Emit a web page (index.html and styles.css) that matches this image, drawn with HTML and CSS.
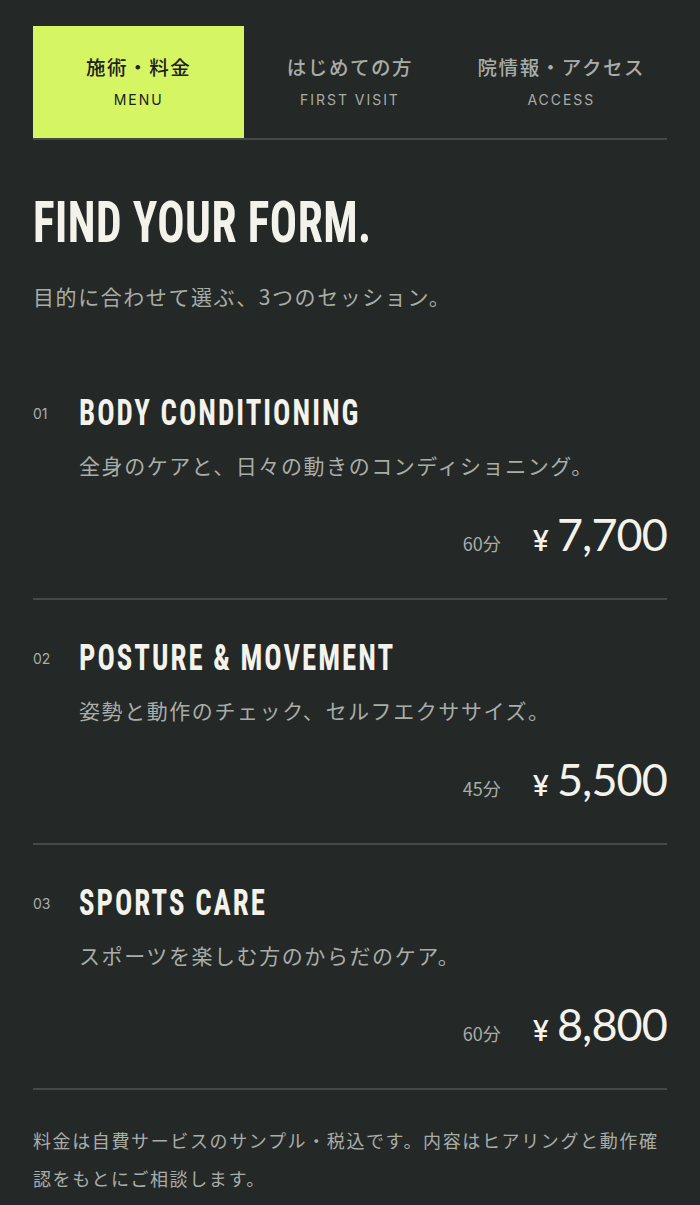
FILE: index.html
```html
<!DOCTYPE html>
<html lang="ja">
<head>
  <meta charset="utf-8">
  <meta name="viewport" content="width=device-width, initial-scale=1">
  <title>施術・料金 | MENU</title>
  <link rel="stylesheet" href="styles.css">
</head>
<body>
  <div class="page">
    <nav class="tabs">
      <a class="tab active" href="#menu">
        <span class="tab-ja">施術・料金</span>
        <span class="tab-en">MENU</span>
      </a>
      <a class="tab" href="#first">
        <span class="tab-ja">はじめての方</span>
        <span class="tab-en">FIRST VISIT</span>
      </a>
      <a class="tab" href="#access">
        <span class="tab-ja">院情報・アクセス</span>
        <span class="tab-en">ACCESS</span>
      </a>
    </nav>

    <header class="intro">
      <h1>FIND YOUR FORM.</h1>
      <p>目的に合わせて選ぶ、3つのセッション。</p>
    </header>

    <ul class="menu-list">
      <li class="menu-item">
        <div class="item-head">
          <span class="item-no">01</span>
          <h2>BODY CONDITIONING</h2>
        </div>
        <p class="item-desc">全身のケアと、日々の動きのコンディショニング。</p>
        <div class="item-price">
          <span class="duration">60分</span>
          <span class="yen">¥</span>
          <span class="amount">7,700</span>
        </div>
      </li>
      <li class="menu-item">
        <div class="item-head">
          <span class="item-no">02</span>
          <h2>POSTURE &amp; MOVEMENT</h2>
        </div>
        <p class="item-desc">姿勢と動作のチェック、セルフエクササイズ。</p>
        <div class="item-price">
          <span class="duration">45分</span>
          <span class="yen">¥</span>
          <span class="amount">5,500</span>
        </div>
      </li>
      <li class="menu-item">
        <div class="item-head">
          <span class="item-no">03</span>
          <h2>SPORTS CARE</h2>
        </div>
        <p class="item-desc">スポーツを楽しむ方のからだのケア。</p>
        <div class="item-price">
          <span class="duration">60分</span>
          <span class="yen">¥</span>
          <span class="amount">8,800</span>
        </div>
      </li>
    </ul>

    <p class="note">料金は自費サービスのサンプル・税込です。内容はヒアリングと動作確認をもとにご相談します。</p>
  </div>
</body>
</html>
```

FILE: styles.css
```css
body {
  margin: 0;
  background: #242827;
  color: #f3f3ec;
  font-family: "Noto Sans CJK JP", "Noto Sans", sans-serif;
}

.page {
  padding: 26px 33px 0;
}

.tabs {
  display: grid;
  grid-template-columns: repeat(3, 1fr);
  border-bottom: 2px solid #454a49;
}

.tab {
  display: flex;
  flex-direction: column;
  align-items: center;
  justify-content: center;
  height: 112px;
  text-decoration: none;
  color: #a9ada7;
}

.tab.active {
  background: #d5f562;
  color: #1d201f;
}

.tab-ja {
  font-size: 19.5px;
  font-weight: 500;
  letter-spacing: 0.08em;
  line-height: 1;
}

.tab-en {
  margin-top: 17px;
  font-family: "Inter", "Noto Sans", sans-serif;
  font-size: 14px;
  letter-spacing: 0.14em;
  line-height: 1;
}

/* condensed display type: Roboto Condensed squeezed a bit more */
.intro h1,
.item-head h2 {
  font-family: "Roboto Condensed", "Roboto", sans-serif;
  font-stretch: condensed;
  font-weight: 700;
  transform-origin: left center;
}

.intro h1 {
  margin: 56px 0 0;
  font-size: 57px;
  line-height: 54px;
  letter-spacing: 0.01em;
  transform: scaleX(0.795);
}

.intro p {
  margin: 32px 0 0;
  font-size: 21px;
  letter-spacing: 0.075em;
  color: #a9ada7;
  line-height: 28px;
}

.menu-list {
  list-style: none;
  margin: 83px 0 0;
  padding: 0;
}

.menu-item {
  padding: 38px 0 41px;
  border-bottom: 2px solid #454a49;
}

.menu-item:first-child {
  padding-top: 0;
}

.item-head {
  display: flex;
  align-items: center;
  gap: 30px;
}

.item-no {
  width: 16px;
  font-family: "Inter", "Noto Sans", sans-serif;
  font-size: 14px;
  color: #a9ada7;
}

.item-head h2 {
  margin: 0;
  font-size: 36px;
  letter-spacing: 0.07em;
  line-height: 40px;
  transform: scaleX(0.8);
}

.item-desc {
  margin: 18px 0 0 46px;
  font-size: 21px;
  letter-spacing: 0.075em;
  color: #a9ada7;
  line-height: 28px;
}

.item-price {
  display: flex;
  justify-content: flex-end;
  align-items: baseline;
  margin-top: 33px;
  line-height: 1;
}

.duration {
  font-size: 18px;
  color: #a9ada7;
  margin-right: 32px;
}

.yen {
  font-family: "Inter", "Noto Sans", sans-serif;
  font-size: 29px;
  font-weight: 500;
  margin-right: 8px;
}

.amount {
  font-family: "Lato", "Inter", sans-serif;
  font-size: 45px;
  font-weight: 400;
  letter-spacing: -0.02em;
}

.note {
  margin: 31px 0 0;
  font-size: 18px;
  letter-spacing: 0.09em;
  line-height: 38px;
  color: #a9ada7;
}
```
